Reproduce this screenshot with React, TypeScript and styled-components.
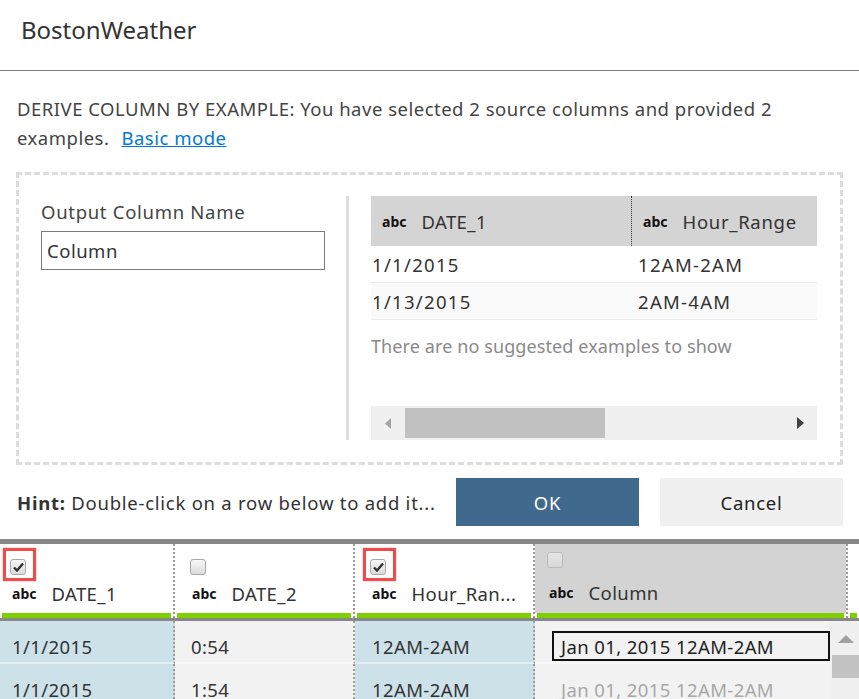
import React from "react";
import styled, { createGlobalStyle } from "styled-components";

const GlobalStyle = createGlobalStyle`
    html, body {
        margin: 0;
        padding: 0;
        background: #ffffff;
    }
    body {
        font-family: "Noto Sans", "Open Sans", sans-serif;
        color: #333333;
        letter-spacing: 0.5px;
    }
`;

const Page = styled.div`
    width: 859px;
    height: 699px;
    overflow: hidden;
    display: flex;
    flex-direction: column;
`;

const TitleBar = styled.div`
    height: 71px;
    box-sizing: border-box;
    border-bottom: 1px solid #808080;
    padding: 15px 0 0 21px;
    font-size: 24px;
    line-height: 30px;
    letter-spacing: 0;
    color: #333333;
`;

const Description = styled.div`
    padding: 23px 16px 0 17px;
    font-size: 18.5px;
    line-height: 29px;
    color: #444444;
`;

const BasicLink = styled.a`
    margin-left: 12px;
    color: #0078d7;
    text-decoration: underline;
    cursor: pointer;
`;

const DashedBox = styled.div`
    margin: 20px 16px 0 16px;
    height: 293px;
    box-sizing: border-box;
    border: 3px dashed #dcdcdc;
    padding: 21px 23px 22px 0;
    display: flex;
`;

const LeftPane = styled.div`
    width: 330px;
    box-sizing: border-box;
    padding: 4px 0 0 22px;
    border-right: 3px solid #dddddd;
`;

const FieldLabel = styled.div`
    font-size: 18.5px;
    line-height: 24px;
    letter-spacing: 0.7px;
    color: #444444;
`;

const NameInput = styled.input`
    margin-top: 7px;
    width: 284px;
    height: 39px;
    box-sizing: border-box;
    border: 1px solid #7a7a7a;
    padding: 0 5px;
    font-family: inherit;
    font-size: 18.5px;
    letter-spacing: 0.5px;
    color: #333333;
    outline: none;
`;

const RightPane = styled.div`
    flex: 1;
    padding-left: 22px;
    display: flex;
    flex-direction: column;
`;

const ExampleHead = styled.div`
    display: grid;
    grid-template-columns: 260px 1fr;
    height: 50px;
    background: #d4d4d4;
`;

const ExampleHeadCell = styled.div<{ $divider?: boolean }>`
    display: flex;
    align-items: center;
    padding-left: 11px;
    border-left: ${(p) => (p.$divider ? "1px dotted #333" : "none")};
`;

const TypeTag = styled.span`
    font-size: 14px;
    font-weight: 700;
    letter-spacing: 0;
    color: #111111;
`;

const ColName = styled.span<{ $wide?: boolean }>`
    margin-left: 15px;
    font-size: 18.5px;
    letter-spacing: ${(p) => (p.$wide ? "0.7px" : "0.4px")};
    color: #333333;
    white-space: nowrap;
`;

const ExampleRow = styled.div<{ $alt?: boolean }>`
    display: grid;
    grid-template-columns: 266px 1fr;
    height: 37px;
    box-sizing: border-box;
    align-items: center;
    border-bottom: 1px solid #ececec;
    background: ${(p) => (p.$alt ? "#fafafa" : "#ffffff")};
    font-size: 18.5px;
    letter-spacing: 1.3px;
    color: #333333;
`;

const ExampleCell = styled.div`
    padding-left: 1px;
`;

const EmptyNote = styled.div`
    margin-top: 14px;
    font-size: 18px;
    line-height: 24px;
    letter-spacing: 0.1px;
    color: #8a8a8a;
`;

const HScroll = styled.div`
    margin-top: auto;
    height: 34px;
    background: #f0f0f0;
    display: flex;
    align-items: center;
`;

const ArrowBox = styled.div`
    width: 34px;
    height: 34px;
    display: flex;
    align-items: center;
    justify-content: center;
`;

const HThumb = styled.div`
    width: 200px;
    height: 30px;
    background: #c1c1c1;
`;

const Spacer = styled.div`
    flex: 1;
`;

const HintRow = styled.div`
    margin-top: 13px;
    height: 48px;
    padding: 0 16px 0 17px;
    display: flex;
    align-items: center;
`;

const HintText = styled.div`
    flex: 1;
    font-size: 18.5px;
    letter-spacing: 0.75px;
    color: #333333;
    white-space: nowrap;
    b {
        font-weight: 700;
    }
`;

const ActionButton = styled.button<{ $primary?: boolean }>`
    width: 183px;
    height: 48px;
    margin-left: ${(p) => (p.$primary ? "0" : "21px")};
    border: none;
    font-family: inherit;
    font-size: 18.5px;
    letter-spacing: 0.75px;
    background: ${(p) => (p.$primary ? "#3f6a8e" : "#f0f0f0")};
    color: ${(p) => (p.$primary ? "#ffffff" : "#222222")};
    cursor: pointer;
`;

const Grid = styled.div`
    margin-top: 13px;
    border-top: 5px solid #878787;
    flex: 1;
    display: flex;
    flex-direction: column;
    overflow: hidden;
`;

const GridHead = styled.div`
    display: flex;
    border-bottom: 3px solid #888888;
`;

const HeadCell = styled.div<{ $width?: number; $last?: boolean }>`
    width: ${(p) => (p.$width ? `${p.$width}px` : "auto")};
    flex: ${(p) => (p.$width ? "none" : "1")};
    box-sizing: border-box;
    border-right: ${(p) => (p.$last ? "none" : "2px dotted #9a9a9a")};
    display: flex;
    flex-direction: column;
`;

const HeadBody = styled.div<{ $pad: number; $shaded?: boolean }>`
    height: 69px;
    box-sizing: border-box;
    padding: ${(p) => (p.$shaded ? "8px" : "15px")} 0 0 ${(p) => p.$pad}px;
    background: ${(p) => (p.$shaded ? "#d3d3d3" : "#ffffff")};
    display: flex;
    flex-direction: column;
    align-items: flex-start;
`;

const HeadLabel = styled.div<{ $shaded?: boolean }>`
    margin-top: ${(p) => (p.$shaded ? "12px" : "6px")};
    height: 24px;
    display: flex;
    align-items: center;
    padding-left: 2px;
`;

const GreenBar = styled.div`
    height: 5px;
    margin: 0 2px;
    background: #7ed000;
`;

const CheckWrap = styled.div<{ $highlight?: boolean; $faded?: boolean }>`
    position: relative;
    width: 16px;
    height: 16px;
    opacity: ${(p) => (p.$faded ? 0.55 : 1)};
    &::after {
        content: "";
        display: ${(p) => (p.$highlight ? "block" : "none")};
        position: absolute;
        top: -11px;
        left: -7px;
        right: -10px;
        bottom: -6px;
        border: 3px solid #f04a4a;
        box-shadow: 0 0 2px rgba(240, 74, 74, 0.4);
    }
`;

const CheckBox = styled.div`
    width: 16px;
    height: 16px;
    box-sizing: border-box;
    border: 1px solid #a8a8a8;
    border-radius: 3px;
    background: linear-gradient(#f6f6f6, #dcdcdc);
    display: flex;
    align-items: center;
    justify-content: center;
`;

const GridBody = styled.div`
    flex: 1;
    display: flex;
`;

const RowsArea = styled.div`
    flex: 1;
    display: flex;
    flex-direction: column;
`;

const DataRow = styled.div`
    display: flex;
    height: 43px;
    flex: none;
`;

const DataCell = styled.div<{ $width?: number; $selected?: boolean; $pad: number; $last?: boolean }>`
    width: ${(p) => (p.$width ? `${p.$width}px` : "auto")};
    flex: ${(p) => (p.$width ? "none" : "1")};
    box-sizing: border-box;
    padding: 9px 0 0 ${(p) => p.$pad}px;
    display: flex;
    align-items: center;
    background: ${(p) => (p.$selected ? "#cde1e9" : "#f2f2f2")};
    border-right: ${(p) => (p.$last ? "none" : "2px dotted #9a9a9a")};
    border-bottom: 2px solid rgba(255, 255, 255, 0.45);
    font-size: 18.5px;
    letter-spacing: 0.4px;
    color: #333333;
    white-space: nowrap;
`;

const EditBox = styled.div`
    width: 100%;
    height: 30px;
    box-sizing: border-box;
    border: 2px solid #111111;
    padding-left: 7px;
    display: flex;
    align-items: center;
    color: #222222;
`;

const GhostText = styled.span`
    padding-left: 9px;
    color: #a8a8a8;
`;

const VScroll = styled.div`
    width: 29px;
    background: #f0f0f0;
    display: flex;
    flex-direction: column;
    align-items: flex-end;
    padding-top: 14px;
`;

const UpArrow = styled.div`
    width: 29px;
    display: flex;
    justify-content: center;
    padding-left: 2px;
    box-sizing: border-box;
`;

const VThumb = styled.div`
    margin-top: 12px;
    width: 27px;
    height: 23px;
    background: #c2c2c2;
`;

type columnType = {
    name: string,
    width?: number,
    headPad: number,
    bodyPad: number,
    checked: boolean,
    selected: boolean,
};

const columns: columnType[] = [
    { name: "DATE_1", width: 175, headPad: 10, bodyPad: 12, checked: true, selected: true },
    { name: "DATE_2", width: 180, headPad: 15, bodyPad: 16, checked: false, selected: false },
    { name: "Hour_Ran...", width: 180, headPad: 15, bodyPad: 17, checked: true, selected: true },
];

const rows = [
    ["1/1/2015", "0:54", "12AM-2AM"],
    ["1/1/2015", "1:54", "12AM-2AM"],
];

function CheckMark() {
    return (
        <svg width="11" height="10" viewBox="0 0 11 10">
            <path d="M1 5.5 L4 8.5 L10 1.5" fill="none" stroke="#333" strokeWidth="2.4" />
        </svg>
    );
}

function Check(props: { checked?: boolean, highlight?: boolean, faded?: boolean }) {
    return (
        <CheckWrap $highlight={props.highlight} $faded={props.faded}>
            <CheckBox>{props.checked && <CheckMark />}</CheckBox>
        </CheckWrap>
    );
}

export default function App() {
    return (
        <React.Fragment>
            <GlobalStyle />
            <Page>
                <TitleBar>BostonWeather</TitleBar>
                <Description>
                    DERIVE COLUMN BY EXAMPLE: You have selected 2 source columns and provided 2 examples.
                    <BasicLink>Basic mode</BasicLink>
                </Description>

                {/* example editor */}
                <DashedBox>
                    <LeftPane>
                        <FieldLabel>Output Column Name</FieldLabel>
                        <NameInput defaultValue="Column" />
                    </LeftPane>
                    <RightPane>
                        <ExampleHead>
                            <ExampleHeadCell>
                                <TypeTag>abc</TypeTag>
                                <ColName>DATE_1</ColName>
                            </ExampleHeadCell>
                            <ExampleHeadCell $divider>
                                <TypeTag>abc</TypeTag>
                                <ColName $wide>Hour_Range</ColName>
                            </ExampleHeadCell>
                        </ExampleHead>
                        <ExampleRow>
                            <ExampleCell>1/1/2015</ExampleCell>
                            <ExampleCell>12AM-2AM</ExampleCell>
                        </ExampleRow>
                        <ExampleRow $alt>
                            <ExampleCell>1/13/2015</ExampleCell>
                            <ExampleCell>2AM-4AM</ExampleCell>
                        </ExampleRow>
                        <EmptyNote>There are no suggested examples to show</EmptyNote>
                        <HScroll>
                            <ArrowBox>
                                <svg width="6" height="11" viewBox="0 0 6 11">
                                    <polygon points="6,0 6,11 0,5.5" fill="#a3a3a3" />
                                </svg>
                            </ArrowBox>
                            <HThumb />
                            <Spacer />
                            <ArrowBox>
                                <svg width="7" height="12" viewBox="0 0 7 12">
                                    <polygon points="0,0 7,6 0,12" fill="#404040" />
                                </svg>
                            </ArrowBox>
                        </HScroll>
                    </RightPane>
                </DashedBox>

                <HintRow>
                    <HintText>
                        <b>Hint:</b> Double-click on a row below to add it...
                    </HintText>
                    <ActionButton $primary>OK</ActionButton>
                    <ActionButton>Cancel</ActionButton>
                </HintRow>

                {/* data grid */}
                <Grid>
                    <GridHead>
                        {columns.map((c) => (
                            <HeadCell key={c.name} $width={c.width}>
                                <HeadBody $pad={c.headPad}>
                                    <Check checked={c.checked} highlight={c.checked} />
                                    <HeadLabel>
                                        <TypeTag>abc</TypeTag>
                                        <ColName>{c.name}</ColName>
                                    </HeadLabel>
                                </HeadBody>
                                <GreenBar />
                            </HeadCell>
                        ))}
                        <HeadCell $width={313}>
                            <HeadBody $pad={12} $shaded>
                                <Check faded />
                                <HeadLabel $shaded>
                                    <TypeTag>abc</TypeTag>
                                    <ColName>Column</ColName>
                                </HeadLabel>
                            </HeadBody>
                            <GreenBar />
                        </HeadCell>
                        <HeadCell $last>
                            <HeadBody $pad={0} />
                            <GreenBar />
                        </HeadCell>
                    </GridHead>
                    <GridBody>
                        <RowsArea>
                            {rows.map((r, i) => (
                                <DataRow key={i}>
                                    {columns.map((c, j) => (
                                        <DataCell key={c.name} $width={c.width} $pad={c.bodyPad} $selected={c.selected}>
                                            {r[j]}
                                        </DataCell>
                                    ))}
                                    <DataCell $pad={17} $last>
                                        {i === 0
                                            ? <EditBox>Jan 01, 2015 12AM-2AM</EditBox>
                                            : <GhostText>Jan 01, 2015 12AM-2AM</GhostText>}
                                    </DataCell>
                                </DataRow>
                            ))}
                        </RowsArea>
                        <VScroll>
                            <UpArrow>
                                <svg width="16" height="8" viewBox="0 0 16 8">
                                    <polygon points="0,8 16,8 8,0" fill="#a0a0a0" />
                                </svg>
                            </UpArrow>
                            <VThumb />
                        </VScroll>
                    </GridBody>
                </Grid>
            </Page>
        </React.Fragment>
    );
}
